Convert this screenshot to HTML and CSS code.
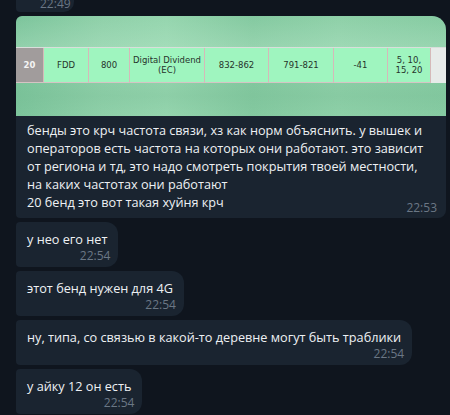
FILE: index.html
```html
<!DOCTYPE html>
<html lang="ru">
<head>
<meta charset="UTF-8">
<title>Чат</title>
<link rel="stylesheet" href="styles.css">
</head>
<body>
<div class="chat">
    <div class="bubble prev">
        <div class="time">22:49</div>
    </div>

    <div class="bubble media">
        <div class="photo">
            <div class="band-row">
                <div class="cell num">20</div>
                <div class="cell">FDD</div>
                <div class="cell">800</div>
                <div class="cell">Digital Dividend<br>(EC)</div>
                <div class="cell">832-862</div>
                <div class="cell">791-821</div>
                <div class="cell">-41</div>
                <div class="cell">5, 10,<br>15, 20</div>
                <div class="cell blank"></div>
            </div>
        </div>
        <div class="text">бенды это крч частота связи, хз как норм объяснить. у вышек и<br>операторов есть частота на которых они работают. это зависит<br>от региона и тд, это надо смотреть покрытия твоей местности,<br>на каких частотах они работают<br>20 бенд это вот такая хуйня крч</div>
        <div class="time">22:53</div>
    </div>

    <div class="bubble">
        <div class="text">у нео его нет</div>
        <div class="time">22:54</div>
    </div>

    <div class="bubble">
        <div class="text">этот бенд нужен для 4G</div>
        <div class="time">22:54</div>
    </div>

    <div class="bubble">
        <div class="text">ну, типа, со связью в какой-то деревне могут быть траблики</div>
        <div class="time">22:54</div>
    </div>

    <div class="bubble">
        <div class="text">у айку 12 он есть</div>
        <div class="time">22:54</div>
    </div>
</div>
</body>
</html>
```

FILE: styles.css
```css
body {
    margin: 0;
    background-color: #0f151e;
    font-family: "Open Sans", "Liberation Sans", sans-serif;
    height: 415px;
    overflow: hidden;
}

.chat {
    display: flex;
    flex-direction: column;
    align-items: flex-start;
    gap: 4px;
    padding-left: 16px;
}

.bubble {
    background-color: #1a2430;
    border-radius: 4px 12px 12px 4px;
    padding: 8px 11px 3px 11px;
    color: #eef1f4;
}

.text {
    font-size: 12.7px;
    line-height: 18px;
    white-space: nowrap;
}

.time {
    font-size: 12px;
    line-height: 16px;
    color: #6b7785;
    text-align: right;
    margin-right: -3px;
}

/* cut-off bubble at the top */
.prev {
    margin-top: -4px;
    padding: 0 6px 0 24px;
    border-radius: 0 0 10px 4px;
}

/* photo + caption */
.media {
    width: 430px;
    box-sizing: border-box;
    padding: 0;
    border-radius: 6px 14px 8px 4px;
    overflow: hidden;
}
.media .text {
    padding: 5px 11px 0 11px;
}
.media .time {
    margin: -11px 9px 2px 0;
}

.photo {
    height: 100px;
    padding-top: 31px;
    box-sizing: border-box;
    background:
        linear-gradient(180deg, rgba(255,255,255,0) 0%, rgba(200,240,215,0.3) 35%, rgba(255,255,255,0) 55%, rgba(110,180,140,0.2) 80%, rgba(255,255,255,0) 100%),
        linear-gradient(90deg, #7cc49b 0%, #8fd0a9 20%, #95d5ae 35%, #84c9a0 55%, #8ed0a8 75%, #86cba2 100%);
}

.band-row {
    display: flex;
    height: 36px;
    border-top: 1px solid #d9dedb;
    box-sizing: border-box;
    font-family: "DejaVu Sans", sans-serif;
    font-size: 8.5px;
    line-height: 10px;
    color: #26332b;
}

.cell {
    display: flex;
    align-items: center;
    justify-content: center;
    text-align: center;
    background-color: #9ff5bf;
    border-right: 1px solid #d5b9b9;
    border-bottom: 1px solid #d5c4c4;
    box-sizing: border-box;
}
.cell:nth-child(1) { width: 28px; }
.cell:nth-child(2) { width: 45px; }
.cell:nth-child(3) { width: 41px; }
.cell:nth-child(4) { width: 75px; }
.cell:nth-child(5) { width: 64px; }
.cell:nth-child(6) { width: 65px; }
.cell:nth-child(7) { width: 54px; }
.cell:nth-child(8) { width: 43px; }

.cell.num {
    background-color: #a19c9c;
    color: #f4f4f4;
    font-weight: bold;
}
.cell.blank {
    flex: 1;
    background-color: #e7ebe9;
    border: none;
}
```
